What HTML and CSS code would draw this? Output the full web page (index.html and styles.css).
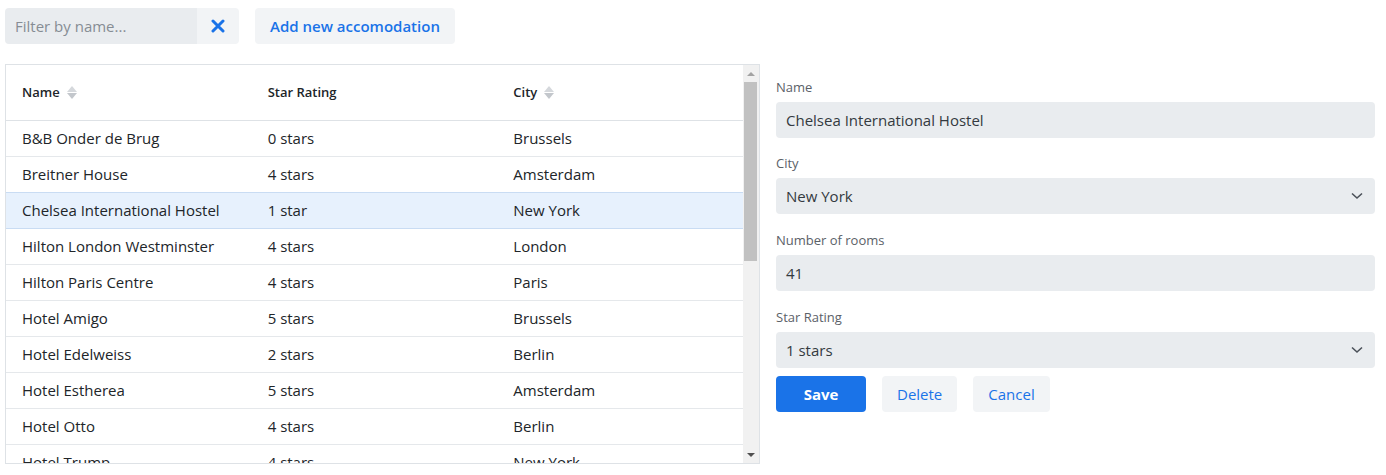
FILE: index.html
```html
<!DOCTYPE html>
<html lang="en">
<head>
<meta charset="utf-8">
<title>Accommodations</title>
<link rel="stylesheet" href="styles.css">
</head>
<body>
<div class="page">
  <div class="toolbar">
    <div class="filter-group">
      <input class="filter-input" type="text" placeholder="Filter by name...">
      <button class="btn-clear" type="button" aria-label="Clear">
        <svg width="14" height="14" viewBox="0 0 14 14"><path d="M2 2 L12 12 M12 2 L2 12" stroke="#1a73e8" stroke-width="3" stroke-linecap="round"/></svg>
      </button>
    </div>
    <button class="btn-light btn-add" type="button">Add new accomodation</button>
  </div>

  <div class="content">
    <div class="table-box">
      <div class="table-scroll">
        <table class="grid">
          <thead>
            <tr>
              <th><span class="th-inner">Name <span class="sort"><i class="up"></i><i class="down"></i></span></span></th>
              <th><span class="th-inner">Star Rating</span></th>
              <th><span class="th-inner">City <span class="sort"><i class="up"></i><i class="down"></i></span></span></th>
            </tr>
          </thead>
          <tbody>
            <tr><td>B&amp;B Onder de Brug</td><td>0 stars</td><td>Brussels</td></tr>
            <tr class="before-selected"><td>Breitner House</td><td>4 stars</td><td>Amsterdam</td></tr>
            <tr class="selected"><td>Chelsea International Hostel</td><td>1 star</td><td>New York</td></tr>
            <tr><td>Hilton London Westminster</td><td>4 stars</td><td>London</td></tr>
            <tr><td>Hilton Paris Centre</td><td>4 stars</td><td>Paris</td></tr>
            <tr><td>Hotel Amigo</td><td>5 stars</td><td>Brussels</td></tr>
            <tr><td>Hotel Edelweiss</td><td>2 stars</td><td>Berlin</td></tr>
            <tr><td>Hotel Estherea</td><td>5 stars</td><td>Amsterdam</td></tr>
            <tr><td>Hotel Otto</td><td>4 stars</td><td>Berlin</td></tr>
            <tr><td>Hotel Trump</td><td>4 stars</td><td>New York</td></tr>
          </tbody>
        </table>
      </div>
      <div class="scrollbar">
        <div class="sb-btn"><i class="sb-up"></i></div>
        <div class="sb-track"><div class="sb-thumb"></div></div>
        <div class="sb-btn"><i class="sb-down"></i></div>
      </div>
    </div>

    <form class="editor">
      <div class="field">
        <label class="label">Name</label>
        <div class="control">Chelsea International Hostel</div>
      </div>
      <div class="field">
        <label class="label">City</label>
        <div class="control select">New York
          <svg class="chev" width="12" height="8" viewBox="0 0 12 8"><path d="M1 1.5 L6 6 L11 1.5" fill="none" stroke="#4b5159" stroke-width="1.6"/></svg>
        </div>
      </div>
      <div class="field">
        <label class="label">Number of rooms</label>
        <div class="control">41</div>
      </div>
      <div class="field field-last">
        <label class="label">Star Rating</label>
        <div class="control select">1 stars
          <svg class="chev" width="12" height="8" viewBox="0 0 12 8"><path d="M1 1.5 L6 6 L11 1.5" fill="none" stroke="#4b5159" stroke-width="1.6"/></svg>
        </div>
      </div>
      <div class="actions">
        <button class="btn-primary" type="button">Save</button>
        <button class="btn-light btn-sm" type="button">Delete</button>
        <button class="btn-light btn-sm" type="button">Cancel</button>
      </div>
    </form>
  </div>
</div>
</body>
</html>
```

FILE: styles.css
```css
* { box-sizing: border-box; }
html, body { margin: 0; padding: 0; background: #fff; }
body {
  font-family: "Open Sans", "Noto Sans", sans-serif;
  font-size: 15px;
  color: #212529;
}
.page { padding: 8px 11px 0 5px; }

.toolbar { display: flex; align-items: center; gap: 16px; height: 36px; }
.filter-group { display: flex; height: 36px; }
.filter-input {
  width: 192px; height: 36px; border: 0; margin: 0;
  background: #e9ecef; border-radius: 4px 0 0 4px;
  padding: 0 10px; font: inherit; font-size: 15px; color: #212529;
  outline: none;
}
.filter-input::placeholder { color: #868c94; }
.btn-clear {
  width: 42px; height: 36px; border: 0; margin: 0; padding: 0;
  background: #f2f4f6; border-radius: 0 4px 4px 0;
  display: flex; align-items: center; justify-content: center;
}
.btn-light {
  border: 0; background: #f2f4f6; border-radius: 4px;
  color: #1a73e8; font-family: inherit; font-size: 15px; font-weight: 600;
  height: 36px; padding: 0 14px; margin: 0;
}
.btn-add { width: 200px; }

.content { display: flex; gap: 16px; margin-top: 20px; align-items: flex-start; }

.table-box {
  width: 755px; height: 400px; border: 1px solid #dee2e6;
  display: flex; overflow: hidden;
}
.table-scroll { flex: 1; overflow: hidden; }
.grid { width: 100%; border-collapse: collapse; table-layout: fixed; }
.grid th {
  text-align: left; font-size: 13px; font-weight: 600; color: #212529;
  height: 55px; padding: 0 16px; border-bottom: 1px solid #dee2e6;
}
.th-inner { display: inline-flex; align-items: center; gap: 7px; }
.sort { display: inline-flex; flex-direction: column; gap: 1px; }
.sort i { width: 0; height: 0; border-left: 5px solid transparent; border-right: 5px solid transparent; }
.sort .up { border-bottom: 6px solid #d5d8dc; }
.sort .down { border-top: 6px solid #c3c7cc; }
.grid td {
  height: 36px; padding: 0 16px; border-bottom: 1px solid #e5e8eb;
  white-space: nowrap; overflow: hidden;
}
.grid tr.selected td { background: #e7f1fd; border-bottom-color: #c9dcf3; }
.grid tr.before-selected td { border-bottom-color: #c9dcf3; }

.scrollbar {
  width: 16px; background: #f1f1f1; display: flex; flex-direction: column;
}
.sb-btn { height: 17px; display: flex; align-items: center; justify-content: center; }
.sb-up { width: 0; height: 0; border-left: 4px solid transparent; border-right: 4px solid transparent; border-bottom: 4px solid #a3a3a3; }
.sb-down { width: 0; height: 0; border-left: 4px solid transparent; border-right: 4px solid transparent; border-top: 4px solid #505050; }
.sb-track { flex: 1; padding: 0 2px 0 1px; }
.sb-thumb { height: 179px; background: #c1c1c1; }

.editor { flex: 1; padding-top: 12.6px; }
.field { margin-bottom: 15.8px; }
.field-last { margin-bottom: 8px; }
.label { display: block; font-size: 13px; line-height: 20px; color: #5b6168; margin-bottom: 5px; }
.control {
  height: 36px; background: #e9ecef; border-radius: 4px;
  padding: 0 10px; display: flex; align-items: center;
  font-size: 15px; color: #343a40; font-weight: 500;
}
.control.select { justify-content: space-between; padding-right: 12px; }
.actions { display: flex; gap: 16px; }
.btn-primary {
  width: 90px; height: 36px; border: 0; border-radius: 4px;
  background: #1a73e8; color: #fff; font-family: inherit; font-size: 15px; font-weight: 700;
}
.btn-sm { font-weight: 500; padding: 0 15px; }
```
